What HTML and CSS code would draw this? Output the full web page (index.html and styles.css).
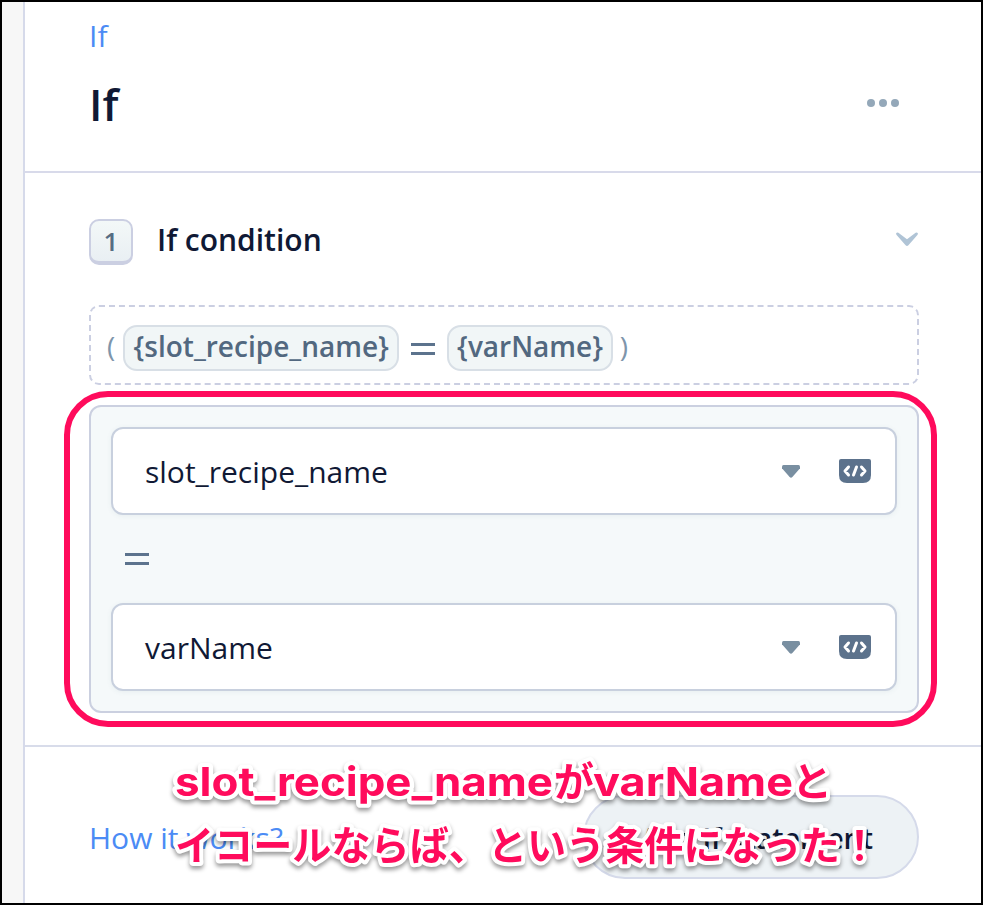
FILE: index.html
```html
<!DOCTYPE html>
<html lang="ja">
<head>
<meta charset="utf-8">
<title>If</title>
<link rel="stylesheet" href="styles.css">
</head>
<body>
<div class="frame">
  <aside class="rail"></aside>
  <main class="panel">
    <header class="head">
      <a class="crumb">If</a>
      <div class="title-row">
        <h1>If</h1>
        <svg class="dots" width="32" height="8" viewBox="0 0 32 8"><circle cx="4" cy="4" r="4"/><circle cx="16" cy="4" r="4"/><circle cx="28" cy="4" r="4"/></svg>
      </div>
    </header>
    <section class="body">
      <div class="step">
        <span class="num">1</span>
        <h2>If condition</h2>
        <svg class="chev" width="24" height="16" viewBox="0 0 24 16"><path d="M1.200 1.200Q2-.2 3.400.8L12 7.200 20.600.8Q22-.2 22.800 1.200 23.200 2.200 22.400 3L13.400 13.200Q12 14.600 10.600 13.200L1.600 3Q.8 2.200 1.200 1.200Z"/></svg>
      </div>
      <div class="expr">
        <span class="paren">(</span><span class="chip">{slot_recipe_name}</span><svg class="eq" width="24" height="12" viewBox="0 0 24 12"><path d="M0 0h24v3H0zM0 9h24v3H0z"/></svg><span class="chip">{varName}</span><span class="paren close">)</span>
      </div>
      <div class="group">
        <div class="field"><span class="value">slot_recipe_name</span>
          <svg class="caret" width="18" height="13" viewBox="0 0 18 13"><path d="M1.500 0h15Q18 .2 18 2v1.300L10.400 12Q9 13.600 7.600 12L0 3.300V2Q0 .2 1.500 0Z"/></svg>
          <svg class="code" width="32" height="24" viewBox="0 0 32 24"><path class="tile" d="M2 0h28q2 0 2 2v14q0 8-8 8H8q-8 0-8-8V2q0-2 2-2z"/><path class="mark" d="M9.500 8 6 12l3.500 4M22.500 8 26 12l-3.500 4M17.500 8l-3 8"/></svg>
        </div>
        <svg class="eq" width="24" height="12" viewBox="0 0 24 12"><path d="M0 0h24v3H0zM0 9h24v3H0z"/></svg>
        <div class="field"><span class="value">varName</span>
          <svg class="caret" width="18" height="13" viewBox="0 0 18 13"><path d="M1.500 0h15Q18 .2 18 2v1.300L10.400 12Q9 13.600 7.600 12L0 3.300V2Q0 .2 1.500 0Z"/></svg>
          <svg class="code" width="32" height="24" viewBox="0 0 32 24"><path class="tile" d="M2 0h28q2 0 2 2v14q0 8-8 8H8q-8 0-8-8V2q0-2 2-2z"/><path class="mark" d="M9.500 8 6 12l3.500 4M22.500 8 26 12l-3.500 4M17.500 8l-3 8"/></svg>
        </div>
        <div class="highlight"></div>
      </div>
    </section>
    <footer class="foot">
      <a class="how">How it works?</a>
      <button class="add">Add If Statement</button>
    </footer>
  </main>
  <svg class="note" width="760" height="150" viewBox="0 0 760 150">
    <text y="47"><tspan x="22" textLength="378" lengthAdjust="spacingAndGlyphs">slot_recipe_name</tspan><tspan x="401">が</tspan><tspan x="440" textLength="200" lengthAdjust="spacingAndGlyphs">varName</tspan><tspan x="639">と</tspan></text>
    <text x="22" y="111" textLength="704" lengthAdjust="spacingAndGlyphs">イコールならば、という条件になった！</text>
  </svg>
</div>
</body>
</html>
```
FILE: styles.css
```css
* { box-sizing: border-box; }
body { margin: 0; font-family: "Open Sans", "Noto Sans CJK JP", sans-serif; color: #101935; background: #fff; }
.frame { position: relative; width: 983px; height: 905px; border: 2px solid #000; display: flex; overflow: hidden; }
.rail { width: 23px; flex: none; background: #f7f7f7; border-right: 2px solid #d6daea; }
.panel { flex: 1; display: flex; flex-direction: column; background: #fff; }
svg { display: block; flex: none; }
.head { height: 171px; padding: 13px 82px 0 64px; border-bottom: 2px solid #d8daea; }
.crumb { display: block; font-size: 30px; line-height: 42px; color: #4b8bf5; }
.title-row { display: flex; justify-content: space-between; align-items: center; height: 92px; }
h1 { margin: 2px 0 0; font-size: 44px; line-height: 60px; font-weight: 600; }
.dots { fill: #94a8b9; }
.body { height: 574px; padding: 46px 62px 0 64px; border-bottom: 2px solid #d8dcea; }
.step { display: flex; align-items: center; height: 46px; }
.num { width: 44px; height: 46px; border: 2px solid #cbcfe2; border-bottom-width: 4px; border-radius: 10px; background: linear-gradient(#f3f8f8, #e9eff3); color: #566c83; font-size: 26px; font-weight: 600; line-height: 41px; text-align: center; }
h2 { margin: -4px 0 0 24px; font-size: 30px; line-height: 40px; font-weight: 600; flex: 1; }
.chev { fill: #b0c4d6; margin-top: -4px; }
.expr { display: flex; align-items: center; height: 80px; margin-top: 40px; padding-left: 16px; border: 2px dashed #cbcfe2; border-radius: 10px; }
.paren { width: 16px; font-size: 28px; color: #7e95ab; line-height: 40px; }
.chip { height: 46px; margin-top: 6px; padding: 0 8.500px; border: 2px solid #d8dfe6; border-radius: 14px; background: #f1f6f7; color: #526880; font-size: 28px; line-height: 39px; font-weight: 600; }
.chip + .close { margin-left: 7px; }
.eq + .chip { padding: 0 7.800px; }
.eq { fill: #5c738d; margin: 7px 12px 0; }
.expr .paren { margin-top: 2px; }
.group { position: relative; height: 308px; margin-top: 20px; padding: 20px; border: 2px solid #cbd0e0; border-radius: 12px; background: #f5f9fa; }
.field { display: flex; align-items: center; height: 88px; padding: 0 24px 0 32px; border: 2px solid #c8d0de; border-radius: 12px; background: #fff; box-shadow: 0 1px 5px rgba(80,110,130,.08); }
.value { flex: 1; font-size: 30px; line-height: 42px; padding-top: 1px; }
.caret { fill: #798fa1; margin: 0 39px 0 0; }
.code .tile { fill: #5c728c; }
.code .mark { fill: none; stroke: #fff; stroke-width: 3; stroke-linecap: round; stroke-linejoin: round; }
.group > .eq { margin: 38px 0 38px 14px; }
.highlight { position: absolute; left: -27px; right: -20px; top: -16px; bottom: -16px; border: 6px solid #ff0b5c; border-radius: 44px; }
.foot { flex: 1; display: flex; justify-content: space-between; align-items: flex-start; padding: 48px 62px 0 64px; }
.how { font-size: 30px; line-height: 42px; margin-top: 22px; color: #4b8bf5; }
.add { width: 336px; height: 84px; padding: 2px 44px 0; border: 2px solid #d5daea; border-radius: 42px; background: #edf2f5; font: 600 28.500px/40px "Open Sans", sans-serif; color: #101935; text-align: right; white-space: nowrap; }
.note { position: absolute; left: 151px; top: 747px; filter: drop-shadow(0 3px 2px rgba(0,0,0,.4)); }
.note text { font-family: Inter, "Noto Sans CJK JP", sans-serif; font-size: 40px; font-weight: 700; fill: #ff0b5c; stroke: #fff; stroke-width: 8px; stroke-linejoin: round; paint-order: stroke; }
```
